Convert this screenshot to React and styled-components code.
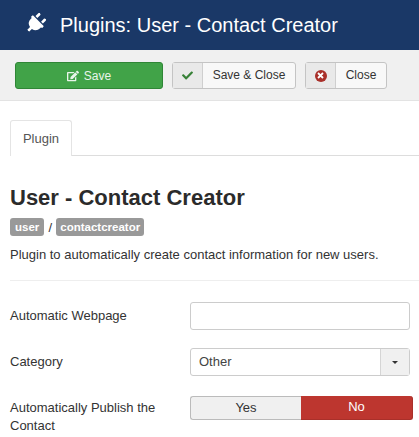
import React from 'react';
import styled, { createGlobalStyle } from 'styled-components';
import { FaPlug, FaCheck, FaEdit } from 'react-icons/fa';

const GlobalStyle = createGlobalStyle`
  html, body {
    margin: 0;
    padding: 0;
    background: #fff;
    overflow: hidden;
  }
  body {
    font-family: 'Liberation Sans', Arial, sans-serif;
    font-size: 13px;
    color: #333;
  }
`;

function App() {
  return (
    <Page>
      <GlobalStyle />
      <Header>
        <PlugIcon />
        <HeaderTitle>Plugins: User - Contact Creator</HeaderTitle>
      </Header>

      <Toolbar>
        <SaveButton>
          <FaEdit />
          Save
        </SaveButton>
        <ToolButton>
          <IconCell>
            <FaCheck color='#378137' size={11} />
          </IconCell>
          <ToolLabel $width={92}>Save &amp; Close</ToolLabel>
        </ToolButton>
        <ToolButton>
          <IconCell>
            <CloseBadge>
              <svg width='7' height='7' viewBox='0 0 7 7'>
                <path d='M1 1l5 5M6 1L1 6' stroke='#fff' strokeWidth='1.8' />
              </svg>
            </CloseBadge>
          </IconCell>
          <ToolLabel $width={50}>Close</ToolLabel>
        </ToolButton>
      </Toolbar>

      <Content>
        <Tabs>
          <Tab>Plugin</Tab>
        </Tabs>

        <Title>User - Contact Creator</Title>
        <Badges>
          <Badge $pad={5}>user</Badge>
          <Slash>/</Slash>
          <Badge $pad={4}>contactcreator</Badge>
        </Badges>
        <Description>Plugin to automatically create contact information for new users.</Description>
        <Divider />

        <FieldRow $height={28} $gap={18}>
          <Label>Automatic Webpage</Label>
          <TextInput />
        </FieldRow>

        <FieldRow $height={28} $gap={20}>
          <Label>Category</Label>
          <SelectBox>
            <SelectValue>Other</SelectValue>
            <SelectArrow>
              <Caret />
            </SelectArrow>
          </SelectBox>
        </FieldRow>

        <FieldRow $height={44}>
          <Label $top={3}>Automatically Publish the Contact</Label>
          <Switch>
            <SwitchOption>Yes</SwitchOption>
            <SwitchOption $active>No</SwitchOption>
          </Switch>
        </FieldRow>
      </Content>
    </Page>
  );
}

const Page = styled.div`
  width: 419px;
  height: 437px;
  overflow: hidden;
`;

const Header = styled.header`
  height: 50px;
  background: #1a3867;
  display: flex;
  align-items: center;
  padding-left: 25px;
  color: #fff;
`;

const PlugIcon = styled(FaPlug)`
  width: 21px;
  height: 21px;
  margin-right: 14px;
  margin-top: -3px;
  transform: rotate(45deg);
`;

const HeaderTitle = styled.h1`
  margin: 0;
  font-size: 20px;
  font-weight: 400;
  line-height: 50px;
`;

const Toolbar = styled.div`
  height: 51px;
  box-sizing: border-box;
  background: #f0f0f0;
  border-bottom: 1px solid #e3e3e3;
  display: flex;
  align-items: flex-start;
  padding: 12px 0 0 15px;
  gap: 9px;
`;

const SaveButton = styled.div`
  width: 148px;
  height: 27px;
  box-sizing: border-box;
  background: #41a348;
  border: 1px solid #2f8636;
  border-radius: 3px;
  color: #e9f5ea;
  font-size: 12px;
  display: flex;
  align-items: center;
  justify-content: center;
  gap: 5px;

  svg {
    width: 12px;
    height: 12px;
  }
`;

const ToolButton = styled.div`
  height: 27px;
  box-sizing: border-box;
  background: #f8f8f8;
  border: 1px solid #c4c4c4;
  border-radius: 3px;
  display: flex;
`;

const IconCell = styled.div`
  width: 29px;
  background: #e9e9e9;
  border-right: 1px solid #cfcfcf;
  display: flex;
  align-items: center;
  justify-content: center;
`;

const CloseBadge = styled.span`
  width: 12px;
  height: 12px;
  border-radius: 50%;
  background: #a9302a;
  display: flex;
  align-items: center;
  justify-content: center;
`;

const ToolLabel = styled.div`
  width: ${(props) => props.$width}px;
  font-size: 12px;
  line-height: 25px;
  text-align: center;
  color: #333;
`;

const Content = styled.main`
  padding: 19px 0 0 10px;
`;

const Tabs = styled.div`
  height: 36px;
  box-sizing: border-box;
  border-bottom: 1px solid #ddd;
  display: flex;
`;

const Tab = styled.div`
  width: 62px;
  height: 36px;
  box-sizing: border-box;
  background: #fff;
  border: 1px solid #e4e4e4;
  border-bottom: none;
  border-radius: 3px 3px 0 0;
  font-size: 13px;
  line-height: 35px;
  text-align: center;
  color: #555;
`;

const Title = styled.h2`
  margin: 30px 0 0;
  font-size: 22px;
  line-height: 24px;
  font-weight: 700;
  color: #2b2b2b;
`;

const Badges = styled.div`
  display: flex;
  align-items: center;
  margin-top: 8px;
  height: 18px;
`;

const Badge = styled.span`
  height: 18px;
  box-sizing: border-box;
  padding: 0 ${(props) => props.$pad}px;
  background: #999;
  border-radius: 3px;
  color: #fff;
  font-size: 11.5px;
  font-weight: 700;
  line-height: 18px;
`;

const Slash = styled.span`
  width: 12px;
  text-align: center;
  color: #333;
`;

const Description = styled.p`
  margin: 10px 0 0;
  font-size: 13px;
  line-height: 18px;
  color: #333;
`;

const Divider = styled.hr`
  margin: 16px 0 21px;
  border: 0;
  border-top: 1px solid #eee;
`;

const FieldRow = styled.div`
  display: flex;
  align-items: flex-start;
  min-height: ${(props) => props.$height}px;
  margin-bottom: ${(props) => props.$gap || 0}px;
  padding-right: 9px;
`;

const Label = styled.label`
  width: 180px;
  flex-shrink: 0;
  font-size: 13px;
  line-height: 18px;
  padding-top: ${(props) => (props.$top !== undefined ? props.$top : 5)}px;
  padding-right: 20px;
  box-sizing: border-box;
  color: #333;
`;

const TextInput = styled.div`
  width: 220px;
  height: 28px;
  box-sizing: border-box;
  background: #fff;
  border: 1px solid #ccc;
  border-radius: 3px;
`;

const SelectBox = styled.div`
  width: 220px;
  height: 28px;
  box-sizing: border-box;
  background: #fff;
  border: 1px solid #ccc;
  border-radius: 3px;
  display: flex;
`;

const SelectValue = styled.div`
  flex: 1;
  padding-left: 8px;
  font-size: 13px;
  line-height: 26px;
  color: #444;
`;

const SelectArrow = styled.div`
  width: 28px;
  background: #f0f0f0;
  border-left: 1px solid #d5d5d5;
  display: flex;
  align-items: center;
  justify-content: center;
`;

const Caret = styled.span`
  width: 0;
  height: 0;
  border-left: 3px solid transparent;
  border-right: 3px solid transparent;
  border-top: 3px solid #333;
`;

const Switch = styled.div`
  width: 223px;
  height: 24px;
  display: flex;
  flex-shrink: 0;
`;

const SwitchOption = styled.div`
  width: ${(props) => (props.$active ? 112 : 111)}px;
  box-sizing: border-box;
  background: ${(props) => (props.$active ? '#bd362f' : '#f0f0f0')};
  color: ${(props) => (props.$active ? '#fff' : '#333')};
  border: 1px solid ${(props) => (props.$active ? '#a9302a' : '#bbb')};
  border-width: ${(props) => (props.$active ? '0 1px 1px 0' : '1px 0 1px 1px')};
  border-radius: ${(props) => (props.$active ? '0 3px 3px 0' : '3px 0 0 3px')};
  font-size: 13px;
  line-height: 22px;
  text-align: center;
`;

export default App;
